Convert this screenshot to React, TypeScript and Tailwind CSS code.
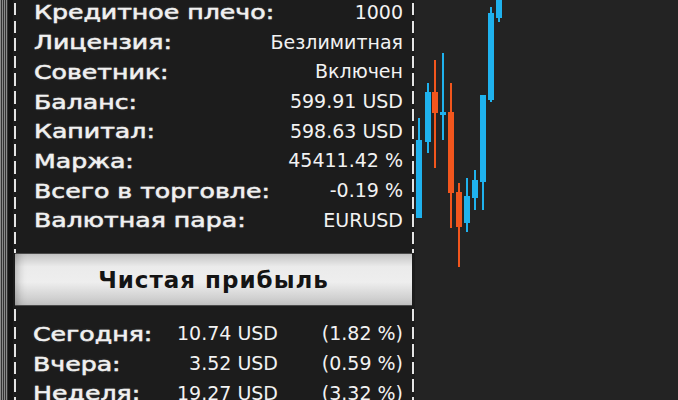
import React from "react";

type Row = { label: string; value: string };

const stats: Row[] = [
  { label: "Кредитное плечо:", value: "1000" },
  { label: "Лицензия:", value: "Безлимитная" },
  { label: "Советник:", value: "Включен" },
  { label: "Баланс:", value: "599.91 USD" },
  { label: "Капитал:", value: "598.63 USD" },
  { label: "Маржа:", value: "45411.42 %" },
  { label: "Всего в торговле:", value: "-0.19 %" },
  { label: "Валютная пара:", value: "EURUSD" },
];

const profit = [
  { label: "Сегодня:", usd: "10.74 USD", pct: "(1.82 %)" },
  { label: "Вчера:", usd: "3.52 USD", pct: "(0.59 %)" },
  { label: "Неделя:", usd: "19.27 USD", pct: "(3.32 %)" },
];

// x, body top/bottom, wick top/bottom in page coords
const candles: { x: number; o: number; c: number; h: number; l: number; up: boolean }[] = [
  { x: 419, o: 140, c: 218, h: 118, l: 218, up: true },
  { x: 428, o: 92, c: 142, h: 83, l: 153, up: true },
  { x: 435, o: 92, c: 113, h: 60, l: 168, up: false },
  { x: 443, o: 112, c: 115, h: 53, l: 140, up: true },
  { x: 451, o: 112, c: 193, h: 83, l: 228, up: false },
  { x: 459, o: 192, c: 227, h: 183, l: 267, up: false },
  { x: 467, o: 196, c: 223, h: 178, l: 232, up: true },
  { x: 475, o: 180, c: 198, h: 170, l: 210, up: true },
  { x: 483, o: 95, c: 182, h: 95, l: 210, up: true },
  { x: 491, o: 13, c: 100, h: 7, l: 102, up: true },
  { x: 499, o: -5, c: 18, h: -5, l: 22, up: true },
];

function Dash() {
  return (
    <div className="w-[2px] shrink-0 self-stretch bg-[repeating-linear-gradient(to_bottom,transparent_0_3px,#e4e4e4_3px_15.5px,transparent_15.5px_17.6px)]" />
  );
}

const labelCls =
  "inline-block origin-left scale-x-[1.26] whitespace-nowrap text-[20px] leading-none text-[#f1f1f1] [font-family:'DejaVu_Sans',sans-serif] [-webkit-text-stroke:0.5px_#f1f1f1] [text-shadow:0_0_2px_rgba(255,255,255,0.3)]";
const valueCls =
  "whitespace-nowrap text-[19px] leading-none text-[#f2f2f2] [font-family:'DejaVu_Sans',sans-serif]";

export default function App() {
  return (
    <div className="flex h-[400px] w-[678px] overflow-hidden bg-[#232323]">
      {/* window frame stripes */}
      <div className="flex w-[13px] shrink-0">
        <div className="w-[8px] bg-[repeating-linear-gradient(to_right,#8a8a8a_0_1px,#333_1px_2px)]" />
        <div className="flex-1 bg-[#141414]" />
      </div>

      <div className="flex h-[400px] w-[402px] shrink-0 flex-col overflow-hidden bg-[#1c1c1c]">
        <div className="flex h-[253px] shrink-0 pl-[1px] pr-[1px]">
          <Dash />
          <div className="mt-[-2.4px] flex flex-1 flex-col pl-[18px] pr-[9px]">
            {stats.map((r) => (
              <div key={r.label} className="flex h-[29.7px] shrink-0 items-center justify-between">
                <span className={labelCls}>{r.label}</span>
                <span className={valueCls}>{r.value}</span>
              </div>
            ))}
          </div>
          <Dash />
        </div>

        <div className="ml-[2px] mr-[3px] flex h-[53px] shrink-0 items-center justify-center border-y border-[#4a4a4a] bg-[linear-gradient(to_bottom,#c4c4c4_0%,#ebebeb_25%,#eeeeee_55%,#d2d2d2_85%,#c2c2c2_100%)] shadow-[inset_10px_0_10px_-8px_rgba(0,0,0,0.3)]">
          <span className="mt-[2px] text-[23px] font-bold leading-none tracking-[1px] text-[#141414] [font-family:'DejaVu_Sans',sans-serif]">
            Чистая прибыль
          </span>
        </div>

        <div className="flex min-h-0 flex-1 pl-[1px] pr-[1px]">
          <Dash />
          <div className="flex flex-1 flex-col pl-[17px] pr-[9px] pt-[13px]">
            {profit.map((r) => (
              <div key={r.label} className="flex h-[29.7px] shrink-0 items-center">
                <span className={labelCls + " w-[100px]"}>{r.label}</span>
                <span className={valueCls + " w-[145px] text-right"}>{r.usd}</span>
                <span className={valueCls + " flex-1 text-right"}>{r.pct}</span>
              </div>
            ))}
          </div>
          <Dash />
        </div>
      </div>

      <svg width="263" height="400" viewBox="415 0 263 400" className="shrink-0">
        {candles.map((k, i) => {
          const col = k.up ? "#1fb2ee" : "#f2561d";
          return (
            <g key={i} fill={col}>
              <rect x={k.x - 1} y={k.h} width="2" height={k.l - k.h} />
              <rect x={k.x - 3} y={k.o} width="6" height={k.c - k.o} />
            </g>
          );
        })}
      </svg>
    </div>
  );
}
